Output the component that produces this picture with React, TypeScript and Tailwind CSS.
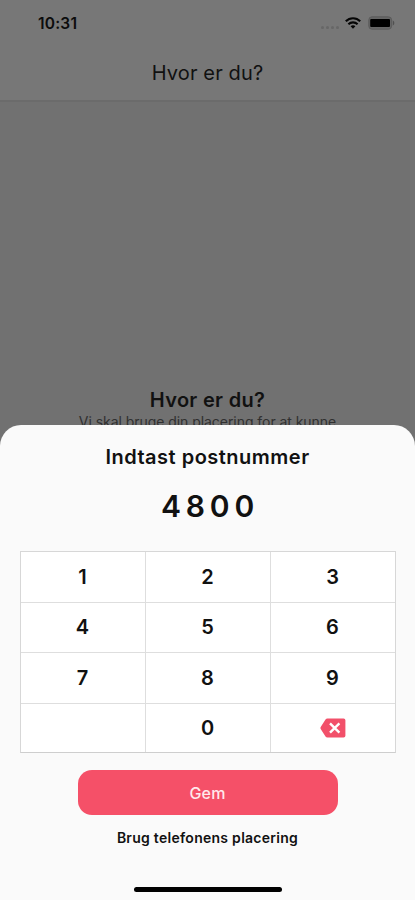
import React from "react";

const keys = ["1", "2", "3", "4", "5", "6", "7", "8", "9", "", "0", "delete"];

function StatusBar() {
  return (
    <div className="flex h-[46px] items-center justify-between pl-[38px] pr-[20px]">
      <span className="pt-[2px] text-[15.5px] font-semibold leading-5 tracking-[0.2px] text-[#0c0c0c]">10:31</span>
      <div className="flex items-center">
        <div className="mr-[6px] mt-[8px] flex gap-[2px]">
          {[0, 1, 2, 3].map((dot) => (
            <span key={dot} className="h-[3px] w-[3px] rounded-full bg-[#676767]" />
          ))}
        </div>
        <svg width="16" height="12" viewBox="0 0 16 12" fill="none" stroke="#050505" strokeWidth="2.1">
          <path d="M0.8 4.3C4.8 0.2 11.2 0.2 15.2 4.3" />
          <path d="M3.4 7.2C6 4.7 10 4.7 12.6 7.2" />
          <path d="M5.6 9.3C7 8 9 8 10.4 9.3L8 11.8Z" fill="#050505" stroke="none" />
        </svg>
        <svg className="ml-[7px]" width="27" height="14" viewBox="0 0 27 14">
          <rect x="0.8" y="0.8" width="22.8" height="12.4" rx="3.2" fill="#666" stroke="#5c5c5c" />
          <rect x="2.2" y="3" width="19.8" height="8" rx="1" fill="#000" />
          <path d="M24.8 4.5C26.8 5.3 26.8 8.7 24.8 9.5Z" fill="#505050" />
        </svg>
      </div>
    </div>
  );
}

function DeleteIcon() {
  return (
    <svg width="26" height="20" viewBox="0 0 26 20">
      <path d="M7.4 0.4H23.6Q25.4 0.4 25.4 2.2V17.8Q25.4 19.6 23.6 19.6H7.4Q6.2 19.6 5.5 18.5L0.7 11Q0.1 10 0.7 9L5.5 1.5Q6.2 0.4 7.4 0.4Z" fill="#f2506a" />
      <path d="M10 5.3L19.4 14.7M19.4 5.3L10 14.7" stroke="#fff" strokeWidth="2.4" />
    </svg>
  );
}

export default function App() {
  return (
    <div className="flex h-[900px] w-full flex-col overflow-hidden bg-[#717171] font-['Inter','Liberation_Sans',sans-serif] text-[#111]">
      <div className="flex h-[446px] shrink-0 flex-col overflow-hidden">
        <header className="h-[102px] shrink-0 border-b-2 border-[#6b6b6b] bg-[#777777]">
          <StatusBar />
          <h1 className="mt-[13px] text-center text-[20px] font-normal leading-7 tracking-[0.15px] text-[#111]">Hvor er du?</h1>
        </header>
        <div className="mt-[284px] text-center">
          <h2 className="text-[20px] font-semibold leading-7 tracking-[0.3px]">Hvor er du?</h2>
          <p className="-mt-px whitespace-nowrap text-[14px] leading-[18px] tracking-[-0.05px] text-[#303030]">Vi skal bruge din placering for at kunne</p>
        </div>
      </div>
      <main className="relative -mt-[21px] flex flex-1 flex-col items-center rounded-t-[21px] bg-[#fafafa]">
        <h2 className="mt-[18px] text-[20px] font-semibold leading-7 tracking-[0.5px]">Indtast postnummer</h2>
        <div className="mt-[15px] pl-[5px] text-[30px] font-semibold leading-10 tracking-[4.8px]">4800</div>
        <div className="mt-[25px] grid h-[202px] w-[376px] grid-cols-3 grid-rows-[50px_49px_50px_48px] gap-px border border-[#d7d7d7] border-b-[#cecece] bg-[#dedede]">
          {keys.map((key, index) => (
            <button key={index} aria-label={key} className="flex items-center justify-center bg-white pb-px text-[20px] font-semibold leading-6">
              {key === "delete" ? <DeleteIcon /> : key}
            </button>
          ))}
        </div>
        <button className="mt-[17px] h-[45px] w-[260px] rounded-[14px] bg-[#f55068] text-[16px] font-medium tracking-[0.2px] text-[#ffe9ec]">Gem</button>
        <button className="mt-[13px] text-[14px] font-semibold leading-5 tracking-[0.27px]">Brug telefonens placering</button>
        <div className="mb-[8px] mt-auto h-[5px] w-[148px] rounded-full bg-black" />
      </main>
    </div>
  );
}
